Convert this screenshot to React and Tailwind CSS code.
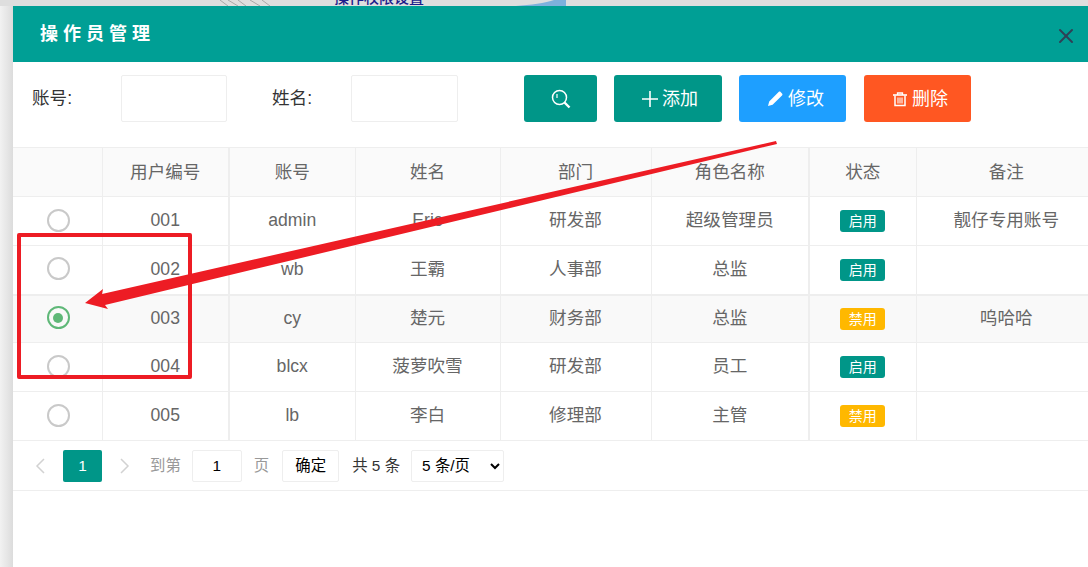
import { X } from "lucide-react";

const columns = [
  { title: "", width: "w-[89px]" },
  { title: "用户编号", width: "w-[127px]", thick: true },
  { title: "账号", width: "w-[126px]" },
  { title: "姓名", width: "w-[145px]" },
  { title: "部门", width: "w-[151px]" },
  { title: "角色名称", width: "w-[158px]", thick: true },
  { title: "状态", width: "w-[107px]" },
  { title: "备注", width: "w-[172px]", last: true },
];

const rows = [
  { id: "001", account: "admin", name: "Eric", dept: "研发部", role: "超级管理员", enabled: true, note: "靓仔专用账号" },
  { id: "002", account: "wb", name: "王霸", dept: "人事部", role: "总监", enabled: true, note: "" },
  { id: "003", account: "cy", name: "楚元", dept: "财务部", role: "总监", enabled: false, note: "呜哈哈", selected: true },
  { id: "004", account: "blcx", name: "菠萝吹雪", dept: "研发部", role: "员工", enabled: true, note: "" },
  { id: "005", account: "lb", name: "李白", dept: "修理部", role: "主管", enabled: false, note: "" },
];

function Radio({ selected }) {
  if (selected) {
    return (
      <span className="mx-auto flex h-[23px] w-[23px] items-center justify-center rounded-full border-2 border-[#5fb878]">
        <span className="h-[10px] w-[10px] rounded-full bg-[#5fb878]" />
      </span>
    );
  }
  return <span className="mx-auto block h-[23px] w-[23px] rounded-full border-2 border-[#c9c9c9]" />;
}

function StatusBadge({ enabled }) {
  return (
    <span
      className={`mb-[1px] inline-block h-[22px] w-[45px] rounded-[3px] text-center text-sm leading-[22px] text-white ${
        enabled ? "bg-[#009688]" : "bg-[#ffb800]"
      }`}
    >
      {enabled ? "启用" : "禁用"}
    </span>
  );
}

function ActionButton({ className, children }) {
  return (
    <button className={`flex h-[47px] items-center rounded-[3px] text-lg text-white ${className}`}>
      {children}
    </button>
  );
}

function SearchIcon() {
  return (
    <svg width="20" height="20" viewBox="0 0 20 20" fill="none" stroke="currentColor">
      <circle cx="8.5" cy="8.5" r="7" strokeWidth="1.5" />
      <path d="M6 5v4" strokeWidth="1.2" />
      <path d="m13.5 13.5 5 5" strokeWidth="2.4" />
    </svg>
  );
}

function PlusIcon() {
  return (
    <svg width="16" height="16" viewBox="0 0 16 16" stroke="currentColor" strokeWidth="1.6">
      <path d="M8 0v16M0 8h16" />
    </svg>
  );
}

function PencilIcon() {
  return (
    <svg width="15" height="15" viewBox="0 0 15 15" fill="currentColor">
      <path d="M0 15l1.2-4.6L10.6 1c.6-.6 1.4-.6 2 0l1.4 1.4c.6.6.6 1.4 0 2l-9.4 9.4z" />
    </svg>
  );
}

function TrashIcon() {
  return (
    <svg width="16" height="16" viewBox="0 0 16 16" fill="none" stroke="currentColor">
      <path d="M1 4h14" strokeWidth="1.6" />
      <path d="M5.5 4V2h5v2" strokeWidth="1.3" />
      <path d="M3 4.5V14.5h10V4.5" strokeWidth="1.5" />
      <path d="M6 6.5v6M8 6.5v6M10 6.5v6" strokeWidth="1.1" />
    </svg>
  );
}

function Annotation() {
  return (
    <svg className="pointer-events-none absolute left-0 top-0" width="1088" height="567" viewBox="0 0 1088 567">
      <rect x="19" y="235" width="171" height="142" fill="none" stroke="#ed1c24" strokeWidth="4" strokeLinejoin="round" />
      <polygon points="776,141 777,144 105,305 108,309 85,303 103,289 102,294" fill="#ed1c24" />
    </svg>
  );
}

function BackgroundScraps() {
  return (
    <svg className="absolute left-0 top-0" width="1088" height="6" viewBox="0 0 1088 6" fill="none">
      <path d="M220 0l8 6M228 0l10 6M238 0l8 6M250 0l10 6M262 0l8 6" stroke="#a8a8a8" />
      <path d="M516 6c14-1 30-3 38-6h12v6z" fill="#7db1dc" />
    </svg>
  );
}

export default function App() {
  return (
    <div
      className="relative flex h-[567px] w-[1088px] flex-col overflow-hidden bg-[#e0e0e0]"
      style={{ fontFamily: '"Liberation Sans", "Noto Sans CJK SC", sans-serif' }}
    >
      <div className="h-[6px] shrink-0 overflow-hidden bg-[#dedede]">
        <BackgroundScraps />
        <p className="relative -mt-[12px] ml-[334px] text-[15px] font-medium leading-5 text-[#1c1c8c]">操作权限设置</p>
      </div>

      <div className="flex min-h-0 flex-1">
        <div className="w-[13px] shrink-0 bg-gradient-to-r from-[#f2f2f2] to-[#dcdcdc]" />

        <div className="min-w-0 flex-1 bg-white">
          <div className="flex h-[56px] items-center justify-between bg-[#009f95] pl-[27px] pr-[10px]">
            <h1 className="text-lg font-bold tracking-[5px] text-white">操作员管理</h1>
            <X className="mt-[3px] text-[#2f4056]" size={24} strokeWidth={2} />
          </div>

          <div className="flex h-[85px] items-start pt-[13px]">
            <label className="ml-[19px] w-[89px] pt-[10px] text-[17.6px] text-[#333]">账号:</label>
            <input className="h-[47px] w-[106px] rounded-[2px] border border-[#eee]" />
            <label className="ml-[45px] w-[79px] pt-[10px] text-[17.6px] text-[#333]">姓名:</label>
            <input className="h-[47px] w-[107px] rounded-[2px] border border-[#eee]" />
            <div className="ml-[66px] flex gap-[17px]">
              <ActionButton className="w-[73px] justify-center bg-[#009688]">
                <SearchIcon />
              </ActionButton>
              <ActionButton className="w-[108px] gap-[4px] bg-[#009688] pl-[28px]">
                <PlusIcon />
                添加
              </ActionButton>
              <ActionButton className="w-[107px] gap-[5px] bg-[#1e9fff] pl-[29px]">
                <PencilIcon />
                修改
              </ActionButton>
              <ActionButton className="ml-[1px] w-[107px] gap-[4px] bg-[#ff5722] pl-[28px]">
                <TrashIcon />
                删除
              </ActionButton>
            </div>
          </div>

          <table className="w-[1075px] table-fixed border-collapse text-center text-[17.6px] text-[#666]">
            <thead>
              <tr className="h-[49px] bg-[#fafafa]">
                {columns.map((column) => (
                  <th
                    key={column.title}
                    className={`${column.width} border-y border-[#eee] font-normal ${
                      column.title ? "border-l" : ""
                    } ${column.thick ? "border-r-2" : ""} ${column.last ? "pl-[8px]" : ""}`}
                  >
                    {column.title}
                  </th>
                ))}
              </tr>
            </thead>
            <tbody>
              {rows.map((row) => (
                <tr
                  key={row.id}
                  className={row.selected ? "h-[48px] border-t-2 border-[#eee] bg-[#f9f9f9]" : "h-[49px]"}
                >
                  <td className="border-b border-[#eee] pb-[2px] pl-[2px]">
                    <Radio selected={row.selected} />
                  </td>
                  <td className="border-b border-l border-r-2 border-[#eee] pb-[2px]">{row.id}</td>
                  <td className="border-b border-l border-[#eee] pb-[2px]">{row.account}</td>
                  <td className="border-b border-l border-[#eee] pb-[2px]">{row.name}</td>
                  <td className="border-b border-l border-[#eee] pb-[2px]">{row.dept}</td>
                  <td className="border-b border-l border-r-2 border-[#eee] pb-[2px]">{row.role}</td>
                  <td className="border-b border-l border-[#eee] pb-[2px]">
                    <StatusBadge enabled={row.enabled} />
                  </td>
                  <td className="border-b border-l border-[#eee] pb-[2px] pl-[8px]">{row.note}</td>
                </tr>
              ))}
            </tbody>
          </table>

          <div className="flex h-[50px] items-center border-b border-[#eee] text-[15.4px]">
            <svg className="ml-[21px]" width="12" height="18" viewBox="0 0 12 18" fill="none" stroke="#d2d2d2" strokeWidth="1.5">
              <path d="M10 2 3 9l7 7" />
            </svg>
            <span className="ml-[17px] h-[32px] w-[39px] rounded-[2px] bg-[#009688] text-center leading-[32px] text-white">1</span>
            <svg className="ml-[17px]" width="12" height="18" viewBox="0 0 12 18" fill="none" stroke="#d2d2d2" strokeWidth="1.5">
              <path d="m2 2 7 7-7 7" />
            </svg>
            <span className="ml-[19px] text-[#999]">到第</span>
            <span className="ml-[11px] h-[32px] w-[50px] rounded-[2px] border border-[#eee] text-center leading-[30px] text-black">1</span>
            <span className="ml-[12px] text-[#999]">页</span>
            <span className="ml-[13px] h-[32px] w-[57px] rounded-[2px] border border-[#eee] text-center leading-[30px] text-black">确定</span>
            <span className="ml-[13px] text-[#333]">共 5 条</span>
            <select className="ml-[11px] h-[32px] w-[93px] rounded-[2px] border border-[#eee] bg-white pl-[6px] text-black">
              <option>5 条/页</option>
            </select>
          </div>
        </div>
      </div>

      <Annotation />
    </div>
  );
}
